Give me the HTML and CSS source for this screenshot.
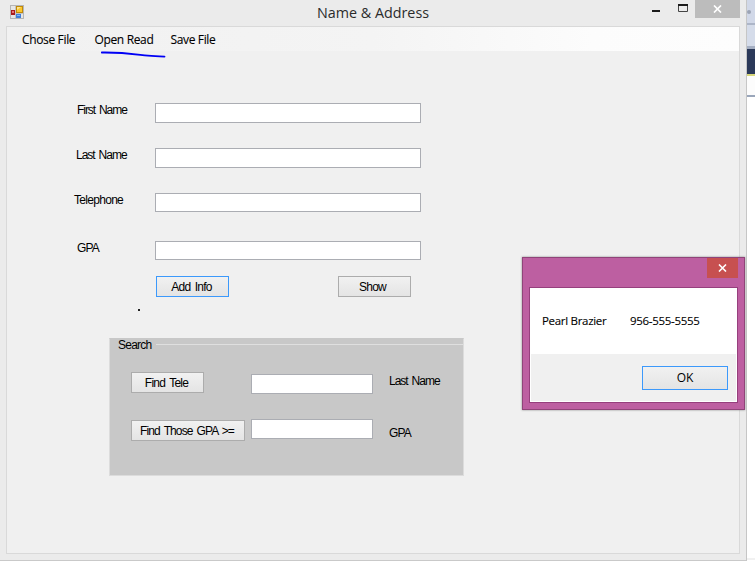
FILE: index.html
```html
<!DOCTYPE html>
<html lang="en">
<head>
<meta charset="utf-8">
<title>Name &amp; Address</title>
<link rel="stylesheet" href="styles.css">
</head>
<body>
<div class="desktop">
  <main class="window">
    <header class="titlebar">
      <svg class="app-icon" width="14" height="14" viewBox="0 0 14 14">
        <rect x=".5" y=".5" width="13" height="13" fill="#e6e6e6" stroke="#b5b5b5"/>
        <path d="M5.5 1v12M1 8.5h12" stroke="#c4c4c4"/>
        <rect x="1" y="5" width="4" height="5" fill="#a91c1c"/><rect x="2" y="6" width="2" height="2" fill="#e77474"/>
        <rect x="6" y="1" width="7" height="7" fill="#c18a08"/><rect x="7" y="2" width="5" height="5" fill="#fbc72e"/><path d="M7 5V2h4z" fill="#ffe58c"/>
        <rect x="6" y="9" width="5" height="4" fill="#3f7fd8"/><rect x="7" y="10" width="3" height="1" fill="#84b6f5"/>
      </svg>
      <h1><span>Name &amp; Address</span></h1>
      <div class="controls">
        <svg class="minmax" width="50" height="18" viewBox="0 0 50 18">
          <path d="M1 11h8" stroke="#1b1b1b" stroke-width="2"/>
          <path d="M27.5 4v7.5h9V4" fill="none" stroke="#444"/><path d="M27 5h10" stroke="#1b1b1b" stroke-width="2"/>
        </svg>
        <div class="close"><svg width="9" height="8" viewBox="0 0 9 8"><path d="M1 .5l7 7M8 .5l-7 7" stroke="#fff" stroke-width="1.7"/></svg></div>
      </div>
    </header>
    <section class="client">
      <nav class="menu">
        <span class="m1">Chose File</span><span class="m2">Open Read</span><span class="m3">Save File</span>
      </nav>
      <div class="form">
        <div class="row r1"><label>First Name</label><i class="input"></i></div>
        <div class="row r2"><label>Last Name</label><i class="input"></i></div>
        <div class="row r3"><label>Telephone</label><i class="input"></i></div>
        <div class="row r4"><label>GPA</label><i class="input"></i></div>
        <div class="actions"><div class="btn focus">Add Info</div><div class="btn show">Show</div></div>
      </div>
      <div class="dot"></div>
      <div class="group">
        <div class="legend"><span>Search</span></div>
        <div class="search-row s1"><div class="btn">Find Tele</div><i class="input"></i><label>Last Name</label></div>
        <div class="search-row s2"><div class="btn wide">Find Those GPA &gt;=</div><i class="input"></i><label>GPA</label></div>
      </div>
    </section>
  </main>
  <aside class="behind"><div class="tabs"><i></i></div><div class="tools"></div><div class="navy"></div><div class="field"></div><div class="page"></div></aside>
  <svg class="pen" width="68" height="10" viewBox="0 0 68 10"><path d="M1.8 3.5C24 3.2 35 5.3 48 6.7c4 .5 7 .8 16.5 .9" fill="none" stroke="#0000f5" stroke-width="1.8" stroke-linecap="round"/></svg>
  <div class="dialog">
    <div class="dialog-head"><div class="dialog-close"><svg width="9" height="8" viewBox="0 0 9 8"><path d="M1 .5l7 7M8 .5l-7 7" stroke="#fff" stroke-width="1.6"/></svg></div></div>
    <div class="dialog-body">
      <div class="message"><span class="person">Pearl Brazier</span><span class="phone">956-555-5555</span></div>
      <div class="dialog-foot"><div class="btn ok">OK</div></div>
    </div>
  </div>
</div>
</body>
</html>
```
FILE: styles.css
```css
* { box-sizing: border-box; }
body { margin: 0; background: #fff; overflow: hidden; font-family: "Liberation Sans", sans-serif; color: #000; }
.desktop { position: relative; display: flex; width: 755px; height: 570px; }
.window { width: 747px; height: 561px; background: #ebebeb; border-right: 1px solid #c6c6c6; border-bottom: 1px solid #c9c9c9; padding-left: 6px; flex: none; }
.titlebar { height: 26px; display: flex; width: 734px; }
.app-icon { margin: 5px 0 0 4px; flex: none; }
h1 { margin: 0 0 0 293px; width: 120px; font: 15px/25px "Open Sans", sans-serif; color: #2b2b2b; white-space: nowrap; }
h1 span { display: inline-block; transform-origin: 0 50%; transform: scaleX(.955); }
.controls { display: flex; margin-left: auto; }
.minmax { margin-right: -6px; }
.close { width: 45px; height: 18px; background: #bcbcbc; display: flex; align-items: center; justify-content: center; }
.client { width: 734px; height: 528px; border: 1px solid #d9d9d9; background: #f0f0f0; }
.menu { height: 24px; padding-left: 15px; display: flex; background: linear-gradient(90deg, #f1f1f1, #f4f4f4 50%, #fcfcfc 80%, #fdfdfd); font: 12px/25px "Open Sans", sans-serif; letter-spacing: -.35px; white-space: nowrap; -webkit-text-stroke: .1px #000; }
.m1 { width: 72.5px; }
.m2 { width: 76px; }
.m2, .m1 { flex: none; }
.form { padding: 52px 0 0 67px; }
.row { display: flex; height: 45px; }
.r3 { height: 48px; }
.r4 { height: 35px; }
label, .btn, .legend { font-size: 12px; line-height: 14px; white-space: nowrap; letter-spacing: -1.05px; word-spacing: 1.6px; }
.row label { width: 81px; padding-left: 3px; }
.row.r2 label { padding-left: 2px; letter-spacing: -1px; }
.row.r3 label { padding-left: 0; letter-spacing: -.7px; }
.row.r4 label { padding-left: 3px; letter-spacing: -.8px; }
.input { display: block; background: #fff; border: 1px solid #abadb3; }
.row .input { width: 266px; height: 20px; }
.row.r3 .input, .row.r4 .input { height: 19px; }
.actions { display: flex; gap: 109px; padding-left: 82px; }
.btn { width: 73px; height: 21px; border: 1px solid #acacac; background: linear-gradient(#f1f1f1, #e4e4e4); text-align: center; line-height: 20px; letter-spacing: -.75px; flex: none; padding-right: 2px; }
.btn.focus { border-color: #3c99fb; }
.btn.show { padding-right: 4px; }
.dot { width: 2px; height: 2px; background: #222; margin: 12px 0 0 131px; }
.group { width: 355px; height: 138px; margin: 27px 0 0 102px; background: #c8c8c8; border: 1px solid #dcdcdc; border-top-color: #c8c8c8; }
.legend { display: flex; height: 14px; padding-left: 8px; letter-spacing: -.75px; line-height: 13px; }
.legend::after { content: ""; flex: 1; height: 1px; background: #dfdfdf; margin: 5px 0 0 4px; }
.search-row { display: flex; padding-left: 21px; height: 47px; }
.s1 { margin-top: 19px; }
.search-row .input { width: 122px; height: 20px; }
.s1 .input { margin: 2px 16px 0 47px; }
.s1 label { margin-top: 2px; letter-spacing: -1px; }
.s2 { margin-top: 1px; }
.s2 .input { margin: -1px 16px 0 6px; }
.s2 label { margin-top: 6px; letter-spacing: -.8px; }
.btn.wide { width: 114px; letter-spacing: -.9px; }
.behind { width: 8px; height: 560px; background: #fff; }
.tabs { height: 25px; background: #d1d8e8; border-bottom: 2px solid #adb6c8; padding-top: 10px; }
.tabs i { display: block; width: 4px; height: 4px; border-radius: 50%; background: #9ca4b5; }
.tools { height: 24px; background: #d5dcea; border-bottom: 3px solid #a5afc3; }
.navy { height: 25px; background: #2b3959; }
.field { height: 23px; background: #fcfcfc; border-top: 2px solid #d7d67a; border-bottom: 2px solid #9aa6ba; }
.page { height: 463px; border-bottom: 2px solid #f1f1f1; }
.pen { position: absolute; left: 100px; top: 49px; }
.dialog { position: absolute; left: 522px; top: 257px; width: 223px; height: 153px; background: #bd5fa1; border: 1px solid #904479; box-shadow: 0 0 2px #888; padding: 0 7px; }
.dialog-head { height: 29px; display: flex; justify-content: flex-end; }
.dialog-close { width: 31px; height: 20px; background: #c75050; display: flex; align-items: center; justify-content: center; margin-right: -1px; }
.dialog-body { height: 116px; margin: 0 -1px; border: 1px solid #963f7d; background: #fff; padding: 0 1px 1px; }
.message { height: 66px; padding: 24px 0 0 11px; font: 11.5px/17px "Open Sans", sans-serif; letter-spacing: -.3px; display: flex; white-space: nowrap; -webkit-text-stroke: .1px #000; }
.person { width: 88px; }
.dialog-foot { height: 47px; background: #f0f0f0; padding: 12px 8px 0 0; display: flex; justify-content: flex-end; }
.btn.ok { width: 86px; height: 24px; border-color: #3c99fb; font: 12px/22px "Open Sans", sans-serif; letter-spacing: 0; padding: 0; }
```
